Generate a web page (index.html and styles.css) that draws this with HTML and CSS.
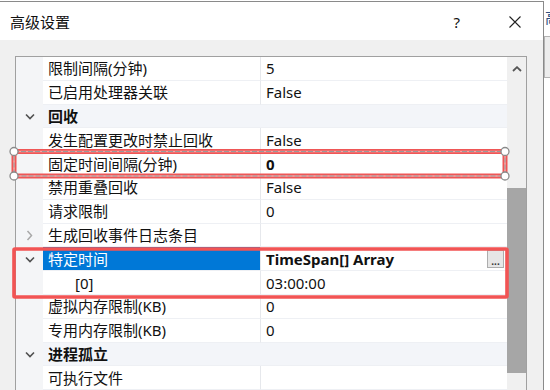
FILE: index.html
```html
<!DOCTYPE html>
<html lang="zh-CN">
<head>
<meta charset="utf-8">
<title>高级设置</title>
<link rel="stylesheet" href="styles.css">
</head>
<body>
<div class="screen">
  <div class="dialog">
    <div class="titlebar">
      <span class="title">高级设置</span>
      <span class="help">?</span>
      <span class="close"><svg width="12" height="12" viewBox="0 0 12 12"><path d="M0.5 0.5L11.5 11.5M11.5 0.5L0.5 11.5" stroke="#222" stroke-width="1.1" fill="none"/></svg></span>
    </div>
    <div class="body">
      <div class="grid">
        <div class="rows">
          <div class="row"><span class="gut"></span><span class="name">限制间隔(分钟)</span><span class="val">5</span></div>
          <div class="row"><span class="gut"></span><span class="name">已启用处理器关联</span><span class="val">False</span></div>
          <div class="row cat"><span class="gut"><svg width="10" height="7" viewBox="0 0 10 7"><path d="M1 1.5L5 5.5L9 1.5" stroke="#505050" stroke-width="1.6" fill="none"/></svg></span><span class="name">回收</span></div>
          <div class="row"><span class="gut"></span><span class="name">发生配置更改时禁止回收</span><span class="val">False</span></div>
          <div class="row"><span class="gut"></span><span class="name">固定时间间隔(分钟)</span><span class="val b">0</span></div>
          <div class="row"><span class="gut"></span><span class="name">禁用重叠回收</span><span class="val">False</span></div>
          <div class="row"><span class="gut"></span><span class="name">请求限制</span><span class="val">0</span></div>
          <div class="row"><span class="gut"><svg width="7" height="11" viewBox="0 0 7 11"><path d="M1.5 1L5.5 5.5L1.5 10" stroke="#a8a8a8" stroke-width="1.5" fill="none"/></svg></span><span class="name">生成回收事件日志条目</span><span class="val"></span></div>
          <div class="row sel"><span class="gut"><svg width="10" height="7" viewBox="0 0 10 7"><path d="M1 1.5L5 5.5L9 1.5" stroke="#505050" stroke-width="1.6" fill="none"/></svg></span><span class="name">特定时间</span><span class="val b">TimeSpan[] Array<span class="dots">...</span></span></div>
          <div class="row"><span class="gut"></span><span class="name sub">[0]</span><span class="val">03:00:00</span></div>
          <div class="row"><span class="gut"></span><span class="name">虚拟内存限制(KB)</span><span class="val">0</span></div>
          <div class="row"><span class="gut"></span><span class="name">专用内存限制(KB)</span><span class="val">0</span></div>
          <div class="row cat"><span class="gut"><svg width="10" height="7" viewBox="0 0 10 7"><path d="M1 1.5L5 5.5L9 1.5" stroke="#505050" stroke-width="1.6" fill="none"/></svg></span><span class="name">进程孤立</span></div>
          <div class="row"><span class="gut"></span><span class="name">可执行文件</span><span class="val"></span></div>
          <div class="row"><span class="gut"></span><span class="name"></span><span class="val"></span></div>
        </div>
        <div class="scrollbar">
          <div class="sb-btn"><svg width="10" height="6" viewBox="0 0 10 6"><path d="M1 5L5 1.2L9 5" stroke="#555" stroke-width="1.8" fill="none"/></svg></div>
          <div class="thumb"></div>
        </div>
      </div>
    </div>
  </div>
  <div class="backdrop">
    <span class="bd-glyph">高</span>
    <div class="bd-box"></div>
  </div>
  <svg class="annot" width="550" height="390" viewBox="0 0 550 390">
    <rect x="14" y="151.5" width="491" height="24.5" fill="none" stroke="#ef5656" stroke-width="5"/>
    <rect x="14" y="151.5" width="491" height="24.5" fill="none" stroke="#f6a4a4" stroke-width="1.6"/>
    <rect x="14" y="151.5" width="491" height="24.5" fill="none" stroke="#9a9a9a" stroke-width="1" stroke-dasharray="5 2"/>
    <circle cx="14" cy="151.5" r="4" fill="#fff" stroke="#8a8a8a" stroke-width="1.3"/>
    <circle cx="14" cy="176" r="4" fill="#fff" stroke="#8a8a8a" stroke-width="1.3"/>
    <circle cx="505" cy="151.5" r="4" fill="#fff" stroke="#8a8a8a" stroke-width="1.3"/>
    <circle cx="505" cy="176" r="4" fill="#fff" stroke="#8a8a8a" stroke-width="1.3"/>
    <rect x="14" y="249" width="493" height="48" fill="none" stroke="#f25454" stroke-width="3.6" rx="1"/>
  </svg>
</div>
</body>
</html>
```
FILE: styles.css
```css
html, body {
  margin: 0;
  padding: 0;
}
body {
  width: 550px;
  height: 390px;
  overflow: hidden;
  background: #fff;
  font-family: "Noto Sans", "Noto Sans CJK SC", sans-serif;
  font-size: 15px;
  color: #111;
}
.screen {
  position: relative;
  display: flex;
  width: 550px;
  height: 390px;
  padding-top: 1px;
  box-sizing: border-box;
}
.dialog {
  width: 544px;
  flex: none;
  border-top: 1px solid #8a8a8a;
  border-right: 1px solid #8a8a8a;
  box-sizing: border-box;
  display: flex;
  flex-direction: column;
  height: 389px;
}
.titlebar {
  height: 38px;
  flex: none;
  background: #fff;
  display: flex;
  align-items: center;
  padding-left: 10px;
}
.title {
  line-height: 20px;
  margin-top: 1px;
}
.help {
  margin-left: auto;
  margin-right: 49px;
  line-height: 20px;
  font-size: 15px;
  margin-top: 1px;
}
.close {
  display: flex;
  margin-right: 22px;
  margin-top: 1px;
}
.body {
  flex: 1;
  background: #f0f0f0;
  padding: 16px 16px 0 15px;
  overflow: hidden;
}
.grid {
  display: flex;
  height: 400px;
  border: 1px solid #a0a0a0;
  border-bottom: none;
  box-sizing: border-box;
}
.rows {
  width: 491px;
  background: #fff;
}
.row {
  display: grid;
  grid-template-columns: 27px 218px 246px;
  height: 23.8px;
}
.gut {
  background: #f4f5f7;
  display: flex;
  align-items: center;
  justify-content: center;
}
.name, .val {
  display: flex;
  align-items: center;
  line-height: 20px;
  white-space: nowrap;
  border-bottom: 1px solid #eef0f4;
  box-sizing: border-box;
}
.name {
  padding-left: 5px;
  border-right: 1px solid #e6e8ec;
}
.name.sub {
  padding-left: 32px;
}
.val {
  padding-left: 5px;
}
.b {
  font-weight: 700;
}
.cat .name {
  grid-column: 2 / 4;
  font-weight: 700;
  background: #f3f5f9;
  border-right: none;
}
.sel .name {
  background: #0078d7;
  color: #fff;
}
.dots {
  margin-left: auto;
  margin-right: 3px;
  width: 17px;
  height: 18px;
  box-sizing: border-box;
  border: 1px solid #adadad;
  background: #e6e6e6;
  font-size: 10px;
  font-weight: 700;
  line-height: 12px;
  color: #333;
  display: flex;
  justify-content: center;
  align-items: flex-end;
}
.scrollbar {
  width: 19px;
  background: #f0f0f0;
  display: flex;
  flex-direction: column;
}
.sb-btn {
  height: 23px;
  display: flex;
  align-items: center;
  justify-content: center;
}
.thumb {
  margin-top: 108px;
  height: 185px;
  background: #a6a6a6;
}
.backdrop {
  flex: 1;
  position: relative;
  overflow: hidden;
  display: flex;
  flex-direction: column;
}
.bd-glyph {
  margin-top: 6px;
  margin-left: 1px;
  line-height: 20px;
  color: #2f4f7f;
  font-size: 15px;
  white-space: nowrap;
}
.bd-box {
  margin-top: 9px;
  height: 40px;
  background: #ededed;
  border: 1px solid #b4b4b4;
  border-right: none;
}
.annot {
  position: absolute;
  left: 0;
  top: 0;
  pointer-events: none;
}
```
